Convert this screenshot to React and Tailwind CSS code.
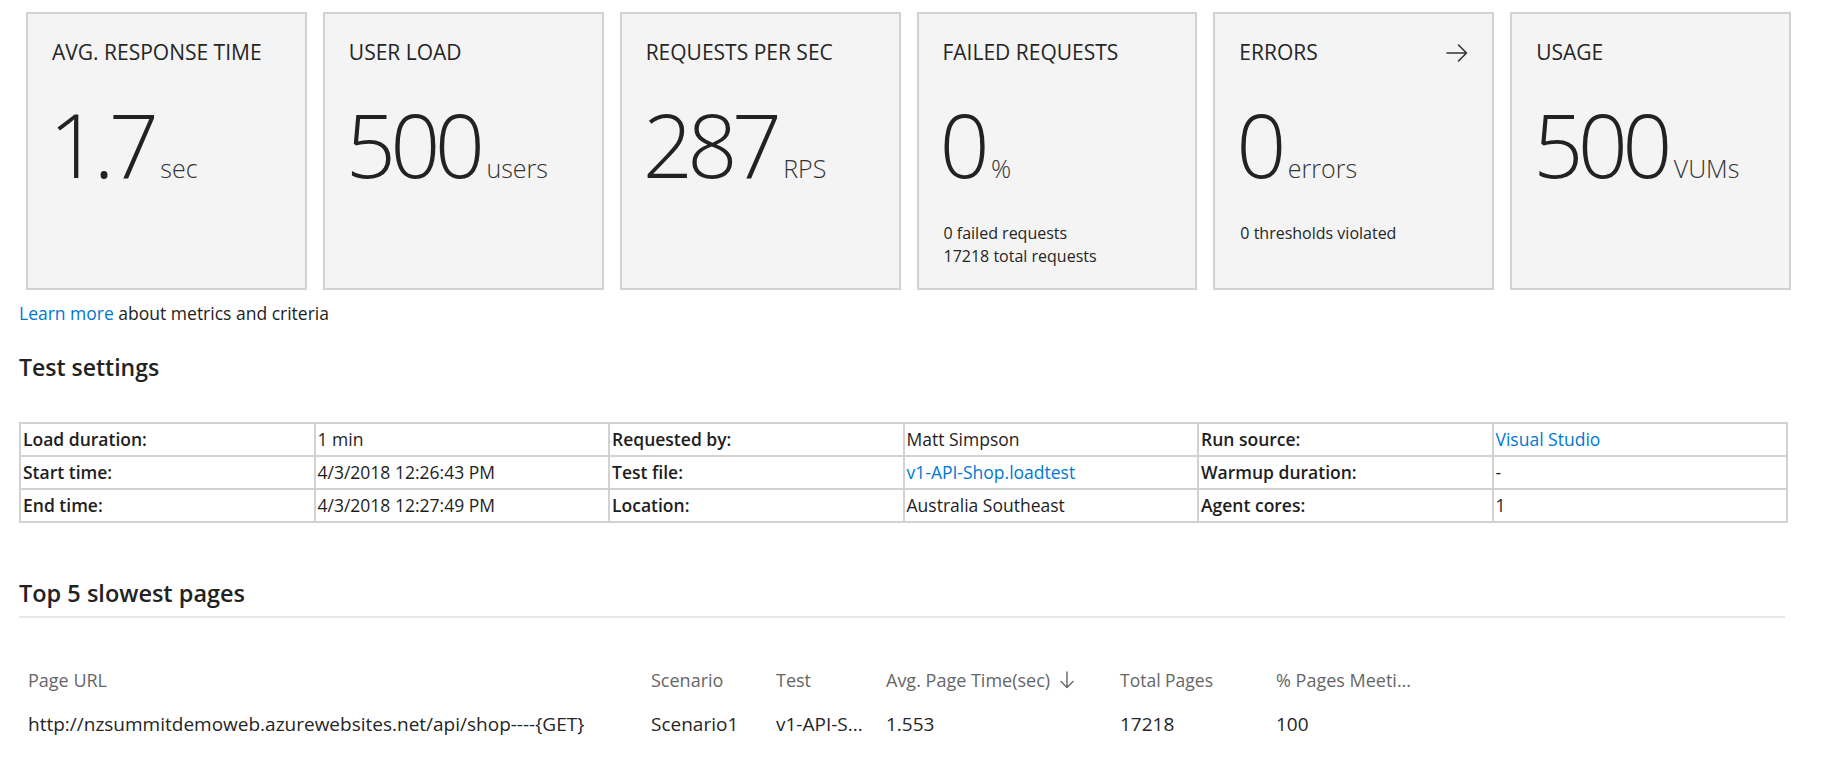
const metrics = [
  { title: "AVG. RESPONSE TIME", value: "1.7", unit: "sec" },
  { title: "USER LOAD", value: "500", unit: "users" },
  { title: "REQUESTS PER SEC", value: "287", unit: "RPS" },
  { title: "FAILED REQUESTS", value: "0", unit: "%", notes: ["0 failed requests", "17218 total requests"] },
  { title: "ERRORS", value: "0", unit: "errors", notes: ["0 thresholds violated"], link: true },
  { title: "USAGE", value: "500", unit: "VUMs" },
];

const settings = [
  ["Load duration:", "1 min", "Requested by:", "Matt Simpson", "Run source:", { link: "Visual Studio" }],
  ["Start time:", "4/3/2018 12:26:43 PM", "Test file:", { link: "v1-API-Shop.loadtest" }, "Warmup duration:", "-"],
  ["End time:", "4/3/2018 12:27:49 PM", "Location:", "Australia Southeast", "Agent cores:", "1"],
];

function ArrowRight() {
  return (
    <svg width="22" height="18" viewBox="0 0 22 18" fill="none" stroke="#333" strokeWidth="1.6" strokeLinecap="round" strokeLinejoin="round">
      <path d="M1 9h19.5M12.5 1l8 8-8 8" />
    </svg>
  );
}

function ArrowDown() {
  return (
    <svg width="14" height="18" viewBox="0 0 14 18" fill="none" stroke="#666" strokeWidth="1.4" strokeLinecap="round" strokeLinejoin="round">
      <path d="M7 1v15.5M1 10.5l6 6 6-6" />
    </svg>
  );
}

function MetricCard({ m }) {
  return (
    <div className="h-[278px] bg-[#f4f4f4] border-2 border-[#d2d2d2] px-6 pt-[25px]">
      <div className="flex items-center justify-between">
        <h2 className="text-[21px] leading-[27px] text-[#252525] font-normal">{m.title}</h2>
        {m.link && <ArrowRight />}
      </div>
      <div className="flex items-baseline mt-[34px] text-[#222]">
        <span className="text-[88px] leading-none font-light tracking-[-0.065em] -ml-[3px]">{m.value}</span>
        <span className="text-[25px] leading-none font-light ml-[7px] text-[#333]">{m.unit}</span>
      </div>
      {m.notes && (
        <div className="mt-[34px] pl-[1px] text-[16px] leading-[23px] text-[#252525]">
          {m.notes.map((n) => (
            <div key={n}>{n}</div>
          ))}
        </div>
      )}
    </div>
  );
}

function Cell({ v, bold }) {
  return (
    <td className={`border-2 border-[#d2d2d2] px-[2px] py-0 h-[31px] leading-[31px] text-[17.5px] text-[#1e1e1e] ${bold ? "font-semibold" : ""}`}>
      {typeof v === "object" ? <a className="text-[#0078d4]">{v.link}</a> : v}
    </td>
  );
}

export default function App() {
  return (
    <div className="w-[1824px] h-[757px] bg-white overflow-hidden" style={{ fontFamily: '"Open Sans", "Noto Sans", sans-serif' }}>
      <div className="ml-[19px] w-[1769px]">
        {/* Metric cards */}
        <div className="ml-[7px] w-[1765px] pt-[12px] grid grid-cols-6 gap-4">
          {metrics.map((m) => (
            <MetricCard key={m.title} m={m} />
          ))}
        </div>

        <p className="mt-[12px] text-[17.5px] leading-[22px] text-[#1e1e1e]">
          <a className="text-[#0078d4]">Learn more</a> about metrics and criteria
        </p>

        {/* Test settings */}
        <h3 className="mt-[28px] text-[23px] leading-[30px] font-semibold text-[#222]">Test settings</h3>
        <table className="mt-[40px] w-full table-fixed border-collapse">
          <tbody>
            {settings.map((row, i) => (
              <tr key={i}>
                {row.map((v, j) => (
                  <Cell key={j} v={v} bold={j % 2 === 0} />
                ))}
              </tr>
            ))}
          </tbody>
        </table>

        {/* Slowest pages */}
        <div className="mt-[55px] w-[1766px] border-b-2 border-[#e8e8e8] pb-[8px]">
          <h3 className="text-[23.5px] leading-[30px] font-semibold text-[#222]">Top 5 slowest pages</h3>
        </div>
        <div className="pl-[9px]">
          <div className="mt-[50px] grid grid-cols-[623px_125px_110px_234px_156px_1fr] text-[18px] leading-[24px] text-[#666]">
            <div>Page URL</div>
            <div>Scenario</div>
            <div>Test</div>
            <div className="flex items-center gap-[10px]">
              Avg. Page Time(sec) <ArrowDown />
            </div>
            <div className="text-[17.5px]">Total Pages</div>
            <div>% Pages Meeti...</div>
          </div>
          <div className="mt-[20px] grid grid-cols-[623px_125px_110px_234px_156px_1fr] text-[19px] leading-[24px] text-[#252525]">
            <div>http://nzsummitdemoweb.azurewebsites.net/api/shop----{"{GET}"}</div>
            <div>Scenario1</div>
            <div>v1-API-S...</div>
            <div>1.553</div>
            <div>17218</div>
            <div>100</div>
          </div>
        </div>
      </div>
    </div>
  );
}
